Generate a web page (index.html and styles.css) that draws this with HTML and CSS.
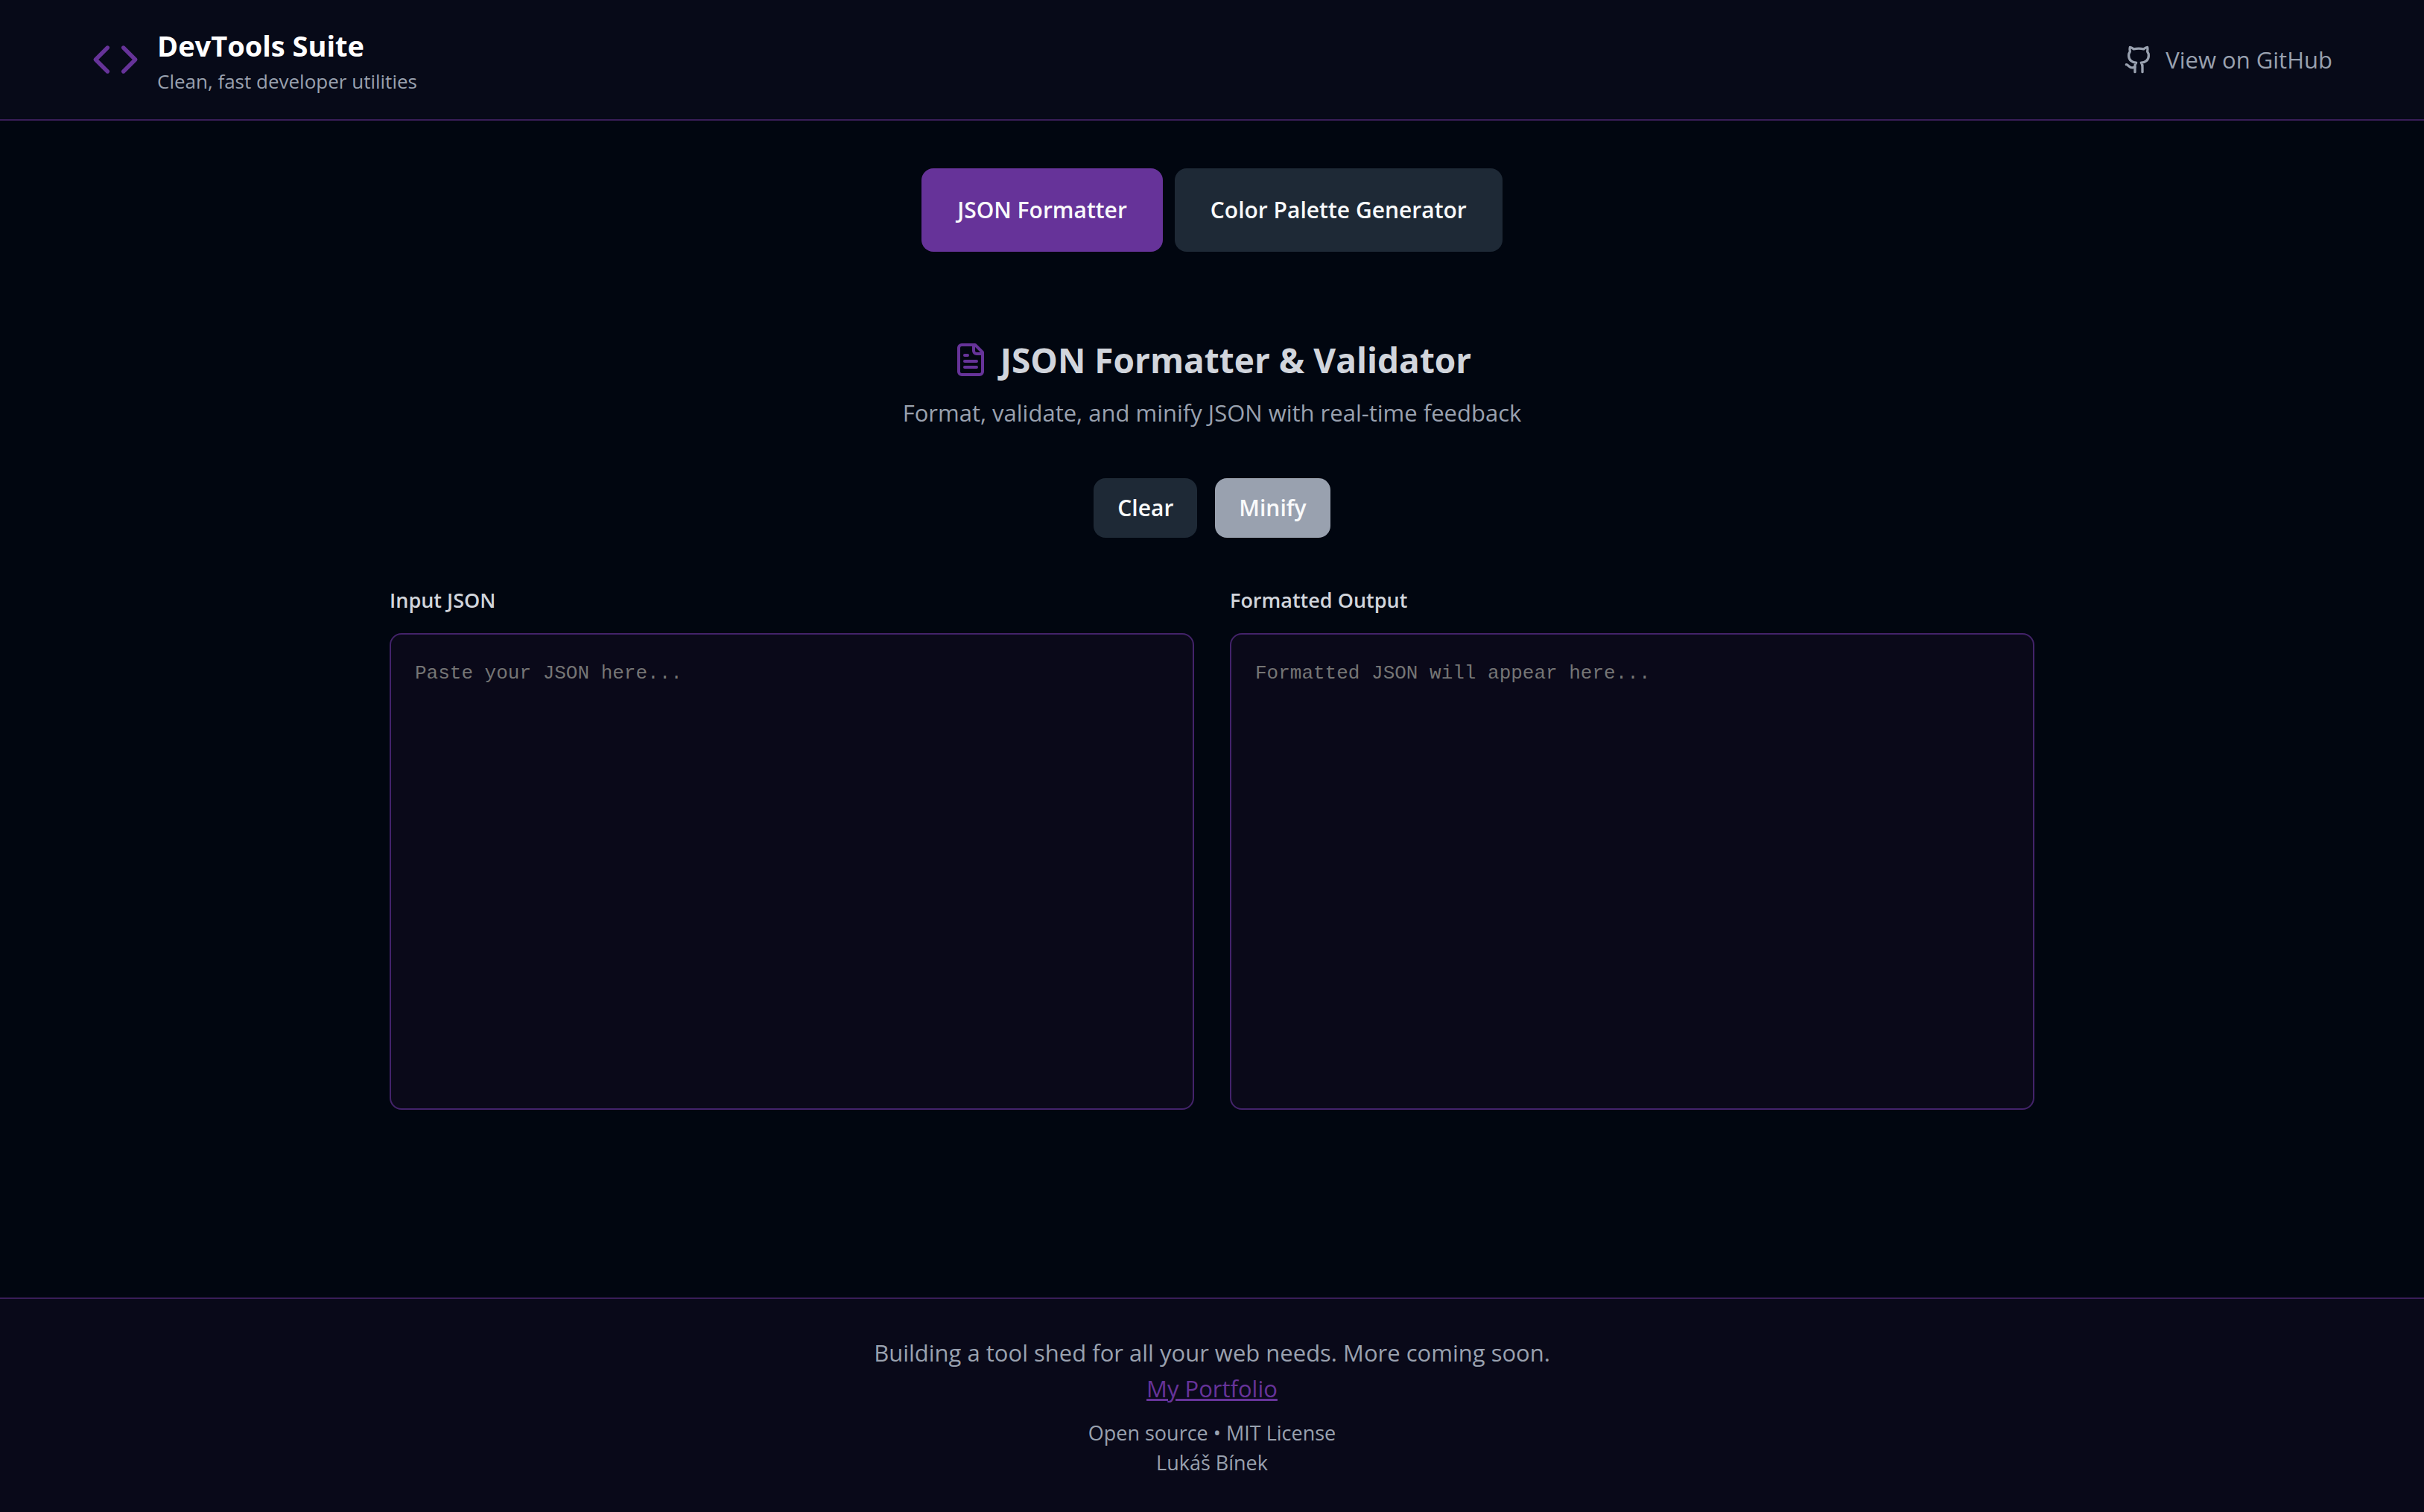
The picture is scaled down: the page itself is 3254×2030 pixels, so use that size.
FILE: index.html
```html
<!DOCTYPE html>
<html lang="en">
<head>
<meta charset="utf-8">
<meta name="viewport" content="width=device-width, initial-scale=1">
<title>DevTools Suite</title>
<link rel="stylesheet" href="styles.css">
</head>
<body>
<header class="site-header">
  <div class="header-inner">
    <div class="brand">
      <svg class="icon icon-brand" viewBox="0 0 24 24" aria-hidden="true"><path d="m16 18 6-6-6-6"/><path d="m8 6-6 6 6 6"/></svg>
      <div>
        <h1 class="brand-name">DevTools Suite</h1>
        <p class="brand-tagline">Clean, fast developer utilities</p>
      </div>
    </div>
    <a class="github-link" href="#github">
      <svg class="icon icon-github" viewBox="0 0 24 24" aria-hidden="true"><path d="M15 22v-4a4.800 4.800 0 0 0-1-3.500c3 0 6-2 6-5.500.080-1.250-.270-2.480-1-3.500.280-1.150.280-2.350 0-3.500 0 0-1 0-3 1.500-2.640-.500-5.360-.500-8 0C6 2 5 2 5 2c-.300 1.150-.300 2.350 0 3.500A5.403 5.403 0 0 0 4 9c0 3.500 3 5.500 6 5.500-.390.490-.680 1.050-.850 1.650-.170.600-.220 1.230-.150 1.850v4"/><path d="M9 18c-4.510 2-5-2-7-2"/></svg>
      <span>View on GitHub</span>
    </a>
  </div>
</header>

<main class="main">
  <nav class="tabs" aria-label="Tools">
    <button class="tab tab-active" type="button">JSON Formatter</button>
    <button class="tab" type="button">Color Palette Generator</button>
  </nav>

  <section class="tool">
    <h2 class="tool-title">
      <svg class="icon icon-file" viewBox="0 0 24 24" aria-hidden="true"><path d="M15 2H6a2 2 0 0 0-2 2v16a2 2 0 0 0 2 2h12a2 2 0 0 0 2-2V7Z"/><path d="M14 2v4a2 2 0 0 0 2 2h4"/><path d="M10 9H8"/><path d="M16 13H8"/><path d="M16 17H8"/></svg>
      <span>JSON Formatter &amp; Validator</span>
    </h2>
    <p class="tool-subtitle">Format, validate, and minify JSON with real-time feedback</p>
    <div class="actions">
      <button class="button" type="button">Clear</button>
      <button class="button button-disabled" type="button" disabled>Minify</button>
    </div>
    <div class="panels">
      <div class="panel">
        <label class="panel-label" for="json-input">Input JSON</label>
        <textarea class="editor" id="json-input" placeholder="Paste your JSON here..."></textarea>
      </div>
      <div class="panel">
        <label class="panel-label" for="json-output">Formatted Output</label>
        <textarea class="editor" id="json-output" placeholder="Formatted JSON will appear here..." readonly></textarea>
      </div>
    </div>
  </section>
</main>

<footer class="site-footer">
  <p>Building a tool shed for all your web needs. More coming soon.</p>
  <p><a class="portfolio-link" href="#portfolio">My Portfolio</a></p>
  <div class="legal">
    <p>Open source • MIT License</p>
    <p>Lukáš Bínek</p>
  </div>
</footer>
</body>
</html>
```

FILE: styles.css
```css
:root {
  --purple: #663399;
  --page: #010610;
  --surface: #090919;
  --slate: #1e2936;
  --muted: #99a1af;
  --light: #d1d5dc;
}

* {
  box-sizing: border-box;
  margin: 0;
}

body {
  display: flex;
  flex-direction: column;
  min-height: 100vh;
  background: var(--page);
  color: var(--muted);
  font-family: "Open Sans", "Noto Sans", sans-serif;
  font-size: 31px;
  line-height: 48px;
}

button {
  border: 0;
  border-radius: 16px;
  background: var(--slate);
  color: #f9fafb;
  font: inherit;
  font-size: 30px;
  font-weight: 600;
}

.icon {
  flex: none;
  fill: none;
  stroke: currentColor;
  stroke-width: 2;
  stroke-linecap: round;
  stroke-linejoin: round;
}

.site-header {
  border-bottom: 2px solid #391e58;
  background: #070a18;
}

.header-inner {
  display: flex;
  align-items: center;
  justify-content: space-between;
  max-width: 3072px;
  margin: 0 auto;
  padding: 32px;
}

.brand {
  display: flex;
  align-items: center;
  gap: 24px;
}

.icon-brand {
  width: 64px;
  height: 64px;
  color: var(--purple);
}

.brand-name {
  color: #fff;
  font-size: 38px;
  font-weight: 700;
  line-height: 58px;
}

.brand-tagline {
  font-size: 26px;
  line-height: 38px;
}

.github-link {
  display: flex;
  align-items: center;
  gap: 16px;
  color: inherit;
  text-decoration: none;
}

.icon-github {
  width: 40px;
  height: 40px;
}

.main {
  flex: 1;
  width: 100%;
  max-width: 2304px;
  margin: 0 auto;
  padding: 64px 48px;
}

.tabs {
  display: flex;
  justify-content: center;
  gap: 16px;
}

.tab {
  padding: 32px 48px;
}

.tab-active {
  background: var(--purple);
}

.tool {
  padding-top: 112px;
}

.tool-title {
  display: flex;
  align-items: center;
  justify-content: center;
  gap: 16px;
  color: var(--light);
  font-size: 46px;
  font-weight: 700;
  line-height: 66px;
}

.icon-file {
  width: 48px;
  height: 48px;
  color: var(--purple);
}

.tool-subtitle {
  margin-top: 14px;
  text-align: center;
}

.actions {
  display: flex;
  justify-content: center;
  gap: 24px;
  margin: 64px 0;
}

.button {
  padding: 16px 32px;
}

.button-disabled {
  background: var(--muted);
}

.panels {
  display: grid;
  grid-template-columns: 1fr 1fr;
  gap: 48px;
}

.panel {
  display: flex;
  flex-direction: column;
  gap: 24px;
}

.panel-label {
  color: var(--light);
  font-size: 27px;
  font-weight: 600;
  line-height: 40px;
}

.editor {
  height: 640px;
  padding: 32px;
  border: 2px solid #43236a;
  border-radius: 16px;
  background: #0a0919;
  color: var(--light);
  font-family: "Liberation Mono", monospace;
  font-size: 26px;
  line-height: 40px;
  resize: none;
}

.editor::placeholder {
  color: #757575;
}

.site-footer {
  padding: 48px 48px 46px;
  border-top: 2px solid #391e58;
  background: var(--surface);
  text-align: center;
}

.portfolio-link {
  color: var(--purple);
}

.legal {
  margin-top: 16px;
  font-size: 27px;
  line-height: 40px;
}
```
